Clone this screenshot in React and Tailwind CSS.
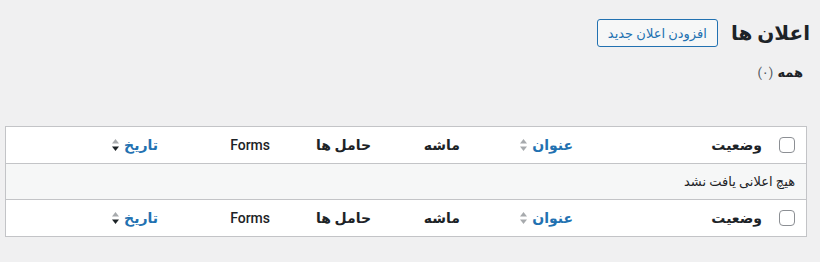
import React from 'react';

const SortIcon = ({ active }) => (
  <svg width="9" height="14" viewBox="0 0 9 14" className="shrink-0">
    <path d="M4.5 1 L8 5.5 H1 Z" fill="#a7aaad" />
    <path d="M4.5 13 L8 8.5 H1 Z" fill={active ? '#1d2327' : '#a7aaad'} />
  </svg>
);

const HeaderRow = () => (
  <div className="flex h-[36px] items-center text-[14px] font-bold text-[#1d2327]">
    <div className="w-[34px] shrink-0 flex justify-start pr-[11px]">
      <span className="block w-[16px] h-[16px] border border-[#8c8f94] rounded-[4px] bg-white" />
    </div>
    <div className="w-[189px] shrink-0 pr-[10px]">وضعیت</div>
    <div className="w-[113px] shrink-0 pr-[10px] flex items-center gap-[4px] text-[#2271b1]">
      <span>عنوان</span>
      <SortIcon />
    </div>
    <div className="w-[89px] shrink-0 pr-[10px]">ماشه</div>
    <div className="w-[101px] shrink-0 pr-[10px]">حامل ها</div>
    <div className="w-[112px] shrink-0 pr-[10px] font-medium">Forms</div>
    <div className="flex-1 pr-[10px] flex items-center gap-[4px] text-[#2271b1]">
      <span>تاریخ</span>
      <SortIcon active />
    </div>
  </div>
);

export default function App() {
  return (
    <div
      dir="rtl"
      className="w-[820px] h-[262px] bg-[#f0f0f1] text-[#1d2327] overflow-hidden"
      style={{ fontFamily: 'Roboto, "DejaVu Sans", sans-serif' }}
    >
      <div className="pr-[10px] pl-[13px] pt-[18px]">
        <div className="flex items-center gap-[13px] h-[30px]">
          <h1 className="text-[20px] font-bold leading-none">اعلان ها</h1>
          <button className="h-[28px] px-[10px] border border-[#2271b1] rounded-[3px] bg-[#f6f7f7] text-[#2271b1] text-[13px] font-medium leading-none">
            افزودن اعلان جدید
          </button>
        </div>
        <div className="mt-[14px] text-[13px] h-[22px] flex items-center pr-[7px]">
          <span className="font-bold">همه</span>
          <span className="text-[#50575e] mr-[4px]">(۰)</span>
        </div>
      </div>
      <div className="ml-[5px] mr-[13px] mt-[42px] border border-[#c3c4c7] bg-white">
        <HeaderRow />
        <div className="h-[37px] bg-[#f6f7f7] border-y border-[#c3c4c7] flex items-center pr-[11px] text-[13px] text-[#1d2327]">
          هیچ اعلانی یافت نشد
        </div>
        <HeaderRow />
      </div>
    </div>
  );
}
